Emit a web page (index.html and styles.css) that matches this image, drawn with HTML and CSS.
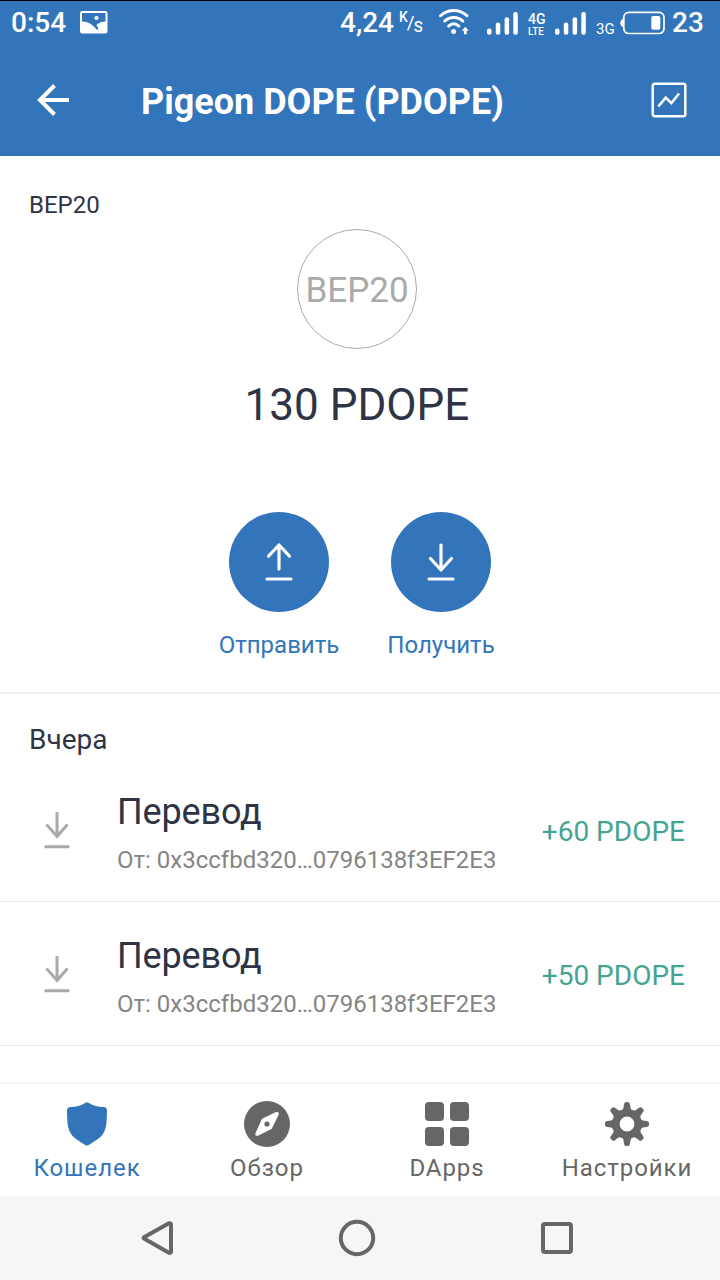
FILE: index.html
```html
<!DOCTYPE html>
<html lang="ru">
  <head>
    <meta charset="utf-8">
    <title>Pigeon DOPE (PDOPE)</title>
    <link rel="stylesheet" href="styles.css">
  </head>
  <body>
    <div class="screen">
      <header class="header">
        <div class="status-bar">
          <span class="time">0:54</span>
          <svg class="picture-icon" width="28" height="23" viewBox="0 0 28 23">
            <rect x="1" y="1" width="25.5" height="20.5" rx="1.5" fill="none" stroke="#fff" stroke-width="2"/>
            <path d="M1 10.500C7 10 12.500 13 16.500 18.500L18.200 18.800C18.500 17 17.500 15.500 16.300 14.300C19 11.500 22 10.500 26.500 10.500V21.500H1Z" fill="#fff"/>
            <circle cx="16.500" cy="7" r="2.100" fill="#fff"/>
          </svg>
          <span class="speed">4,24</span>
          <span class="speed-unit"><span class="unit-k">K</span><span class="unit-slash">/</span><span class="unit-s">S</span></span>
          <svg class="wifi-icon" width="30" height="26" viewBox="0 0 30 26" fill="none" stroke="#fff" stroke-width="2.900" stroke-linecap="round">
            <path d="M1.500 6.800C9 -.2 20.500 -.2 28 6.800"/>
            <path d="M5.600 12.100C11 7.200 18.500 7.200 23.900 12.100"/>
            <path d="M9.600 17.100C12.800 14.300 16.700 14.300 19.900 17.100"/>
            <circle cx="14.600" cy="22.500" r="2.500" fill="#fff" stroke="none"/>
            <path d="M26.300 17.800L29.800 21.800H27.700V25.300H24.900V21.800H22.800Z" fill="#fff" stroke="none"/>
          </svg>
          <svg width="32" height="23" viewBox="0 0 32 23" fill="#fff">
            <rect x="0" y="16.500" width="4.500" height="6.300" rx="2"/>
            <rect x="8.800" y="10.500" width="4.500" height="12.300" rx="2"/>
            <rect x="17.600" y="5.300" width="4.500" height="17.500" rx="2"/>
            <rect x="26.300" y="0" width="4.500" height="22.800" rx="2"/>
          </svg>
          <span class="network-stack"><span>4G</span><span>LTE</span></span>
          <svg width="32" height="23" viewBox="0 0 32 23" fill="#fff">
            <rect x="0" y="16.500" width="4.500" height="6.300" rx="2"/>
            <rect x="8.800" y="10.500" width="4.500" height="12.300" rx="2"/>
            <rect x="17.600" y="5.300" width="4.500" height="17.500" rx="2"/>
            <rect x="26.300" y="0" width="4.500" height="22.800" rx="2"/>
          </svg>
          <span class="network">3G</span>
          <svg width="46" height="24" viewBox="0 0 46 24">
            <path d="M4 7.500C1.500 8 .3 10 .3 12S1.500 16 4 16.500Z" fill="#fff"/>
            <rect x="3.800" y="1.300" width="40.200" height="21.200" rx="5" fill="none" stroke="#fff" stroke-width="1.700"/>
            <rect x="31.300" y="5" width="9" height="13.800" rx="1.800" fill="#fff"/>
          </svg>
          <span class="battery-level">23</span>
        </div>
        <div class="toolbar">
          <svg width="34" height="34" viewBox="0 0 34 34" fill="none" stroke="#fff" stroke-width="4">
            <path d="M33 17H4"/>
            <path d="M18.500 2.500L4 17L18.500 31.500"/>
          </svg>
          <h1 class="title">Pigeon DOPE (PDOPE)</h1>
          <svg width="36" height="36" viewBox="0 0 36 36" fill="none" stroke="#fff" stroke-width="2.500">
            <rect x="1.700" y="1.700" width="32.600" height="32.600" rx="2"/>
            <path d="M7.300 24.500L14.700 15.700L20.400 21.200L28 11.500"/>
          </svg>
        </div>
      </header>

      <main class="content">
        <section class="asset">
          <div class="asset-type">BEP20</div>
          <div class="asset-logo">BEP20</div>
          <div class="balance">130 PDOPE</div>
          <div class="actions">
            <div class="action">
              <div class="action-circle">
                <svg width="30" height="40" viewBox="0 0 30 40" fill="none" stroke="#fff" stroke-width="3.200" stroke-linecap="round" stroke-linejoin="round">
                  <path d="M15 27V3M4.500 14.200L15 3L25.500 14.200M3 37H27"/>
                </svg>
              </div>
              <div class="action-label">Отправить</div>
            </div>
            <div class="action">
              <div class="action-circle">
                <svg width="30" height="40" viewBox="0 0 30 40" fill="none" stroke="#fff" stroke-width="3.200" stroke-linecap="round" stroke-linejoin="round">
                  <path d="M15 3V28M4.500 16.500L15 28L25.500 16.500M3 37H27"/>
                </svg>
              </div>
              <div class="action-label">Получить</div>
            </div>
          </div>
        </section>

        <section class="history">
          <h2 class="day">Вчера</h2>
          <div class="transaction">
            <svg class="transfer-icon" width="26" height="38" viewBox="0 0 26 38" fill="none" stroke="#aaa" stroke-width="3">
              <path d="M13 1V26M2.500 13.500L13 25.500L23.500 13.500M.5 35.800H25.500"/>
            </svg>
            <div class="details">
              <div class="name">Перевод</div>
              <div class="address">От: 0x3ccfbd320…0796138f3EF2E3</div>
            </div>
            <div class="amount">+60 PDOPE</div>
          </div>
          <div class="transaction">
            <svg class="transfer-icon" width="26" height="38" viewBox="0 0 26 38" fill="none" stroke="#aaa" stroke-width="3">
              <path d="M13 1V26M2.500 13.500L13 25.500L23.500 13.500M.5 35.800H25.500"/>
            </svg>
            <div class="details">
              <div class="name">Перевод</div>
              <div class="address">От: 0x3ccfbd320…0796138f3EF2E3</div>
            </div>
            <div class="amount">+50 PDOPE</div>
          </div>
        </section>
      </main>

      <nav class="tabs">
        <div class="tab active">
          <svg width="48" height="48" viewBox="0 0 48 48" fill="currentColor">
            <path d="M22.500 2.800Q24 1.800 25.500 2.800C30 6 35 7 40.500 7.100Q44 7.300 44 10.500C43.800 22 43.500 28 40.500 33C37.500 38.500 31 41.500 25.700 45Q24 46 22.300 45C17 41.500 10.500 38.500 7.500 33C4.500 28 4.200 22 4 10.500Q4 7.300 7.500 7.100C13 7 18 6 22.500 2.800Z"/>
          </svg>
          <span>Кошелек</span>
        </div>
        <div class="tab">
          <svg width="48" height="48" viewBox="0 0 48 48" fill="currentColor">
            <circle cx="24" cy="24" r="23"/>
            <path d="M19.500 18.500L32.500 12.300Q36.500 11 35.500 15L29 28.200Q28.700 29 28 29.300L15 35.700Q11.500 36.500 12.600 33L18.600 19.500Q19 18.800 19.500 18.500Z" fill="#fff"/>
            <circle cx="24" cy="24" r="2.600"/>
          </svg>
          <span>Обзор</span>
        </div>
        <div class="tab">
          <svg width="48" height="48" viewBox="0 0 48 48" fill="currentColor">
            <rect x="2" y="2" width="19" height="19" rx="4"/>
            <rect x="27" y="2" width="19" height="19" rx="4"/>
            <rect x="2" y="27" width="19" height="19" rx="4"/>
            <rect x="27" y="27" width="19" height="19" rx="4"/>
          </svg>
          <span>DApps</span>
        </div>
        <div class="tab">
          <svg width="48" height="48" viewBox="0 0 48 48" fill="currentColor">
            <defs>
              <path id="tooth" d="M18.500 11C20.500 9.500 20.700 7 21 4.500Q21.200 2 23 2H25Q26.800 2 27 4.500C27.300 7 27.500 9.500 29.500 11Z"/>
            </defs>
            <circle cx="24" cy="24" r="11.200" fill="none" stroke="currentColor" stroke-width="7.600"/>
            <use href="#tooth"/>
            <use href="#tooth" transform="rotate(45 24 24)"/>
            <use href="#tooth" transform="rotate(90 24 24)"/>
            <use href="#tooth" transform="rotate(135 24 24)"/>
            <use href="#tooth" transform="rotate(180 24 24)"/>
            <use href="#tooth" transform="rotate(225 24 24)"/>
            <use href="#tooth" transform="rotate(270 24 24)"/>
            <use href="#tooth" transform="rotate(315 24 24)"/>
          </svg>
          <span>Настройки</span>
        </div>
      </nav>

      <div class="system-nav">
        <svg width="40" height="40" viewBox="0 0 40 40" fill="none" stroke="#666" stroke-width="4" stroke-linejoin="round">
          <path d="M7 20.500Q6 20 7 19.300L31.500 5.400Q34 4.600 34 6.500V33.500Q34 35.500 31.500 34.600Z"/>
        </svg>
        <svg width="40" height="40" viewBox="0 0 40 40" fill="none" stroke="#666" stroke-width="4">
          <circle cx="20" cy="20" r="16.200"/>
        </svg>
        <svg width="40" height="40" viewBox="0 0 40 40" fill="none" stroke="#666" stroke-width="4">
          <rect x="6" y="6" width="28" height="28" rx="2"/>
        </svg>
      </div>
    </div>
  </body>
</html>
```

FILE: styles.css
```css
body {
  margin: 0;
  padding: 0;
  background-color: #fff;
  font-family: Roboto, sans-serif;
  color: #2e3445;
}

svg {
  display: block;
  flex-shrink: 0;
}

.screen {
  display: flex;
  flex-direction: column;
  width: 720px;
  height: 1280px;
  overflow: hidden;
}

.header {
  height: 155px;
  border-top: 1px solid #000;
  background-color: #3275bb;
  color: #fff;
}

.status-bar {
  display: flex;
  align-items: center;
  height: 44px;
  padding-left: 11px;
  font-size: 28px;
  font-weight: 500;
  line-height: 44px;
  white-space: nowrap;
}

.time {
  width: 69px;
}

.picture-icon {
  margin-top: -2px;
}

.speed {
  width: 59px;
  margin-left: 232px;
}

.speed-unit {
  display: flex;
  width: 40px;
  height: 24px;
  line-height: 24px;
}

.unit-k {
  font-size: 14px;
  line-height: 13px;
}

.unit-slash {
  margin-left: -1px;
  font-size: 19px;
  font-weight: 400;
  line-height: 24px;
}

.unit-s {
  margin-left: -1px;
  font-size: 15px;
  line-height: 33px;
}

.wifi-icon {
  margin: -2px 18px 0 0;
}

.network-stack {
  display: flex;
  flex-direction: column;
  width: 27px;
  margin: 3px 0 0 9px;
  font-size: 14px;
  line-height: 14px;
}

.network-stack span:last-child {
  font-size: 10px;
  line-height: 12px;
}

.network {
  width: 24px;
  margin-left: 9px;
  padding-top: 11px;
  font-size: 15px;
  font-weight: 400;
  line-height: 32px;
}

.battery-level {
  margin-left: 6px;
}

.toolbar {
  display: flex;
  align-items: center;
  height: 110px;
  padding: 0 33px 0 36px;
}

.title {
  flex: 1;
  margin: 3px 0 0 71px;
  font-size: 36px;
  font-weight: 700;
  line-height: 44px;
}

.asset {
  display: flex;
  flex-direction: column;
  align-items: center;
  box-sizing: border-box;
  height: 538px;
  padding-top: 35px;
  border-bottom: 2px solid #eee;
}

.asset-type {
  align-self: flex-start;
  margin-left: 29px;
  font-size: 24px;
  line-height: 28px;
}

.asset-logo {
  box-sizing: border-box;
  width: 120px;
  height: 120px;
  margin: 9.5px 6px 0 0;
  border: 1px solid #aaa;
  border-radius: 50%;
  color: #aaa;
  font-size: 35px;
  line-height: 121px;
  text-align: center;
}

.balance {
  margin: 30.5px 6px 0 0;
  font-size: 44px;
  line-height: 52px;
}

.actions {
  display: flex;
  margin-top: 80.5px;
}

.action {
  display: flex;
  flex-direction: column;
  align-items: center;
  width: 162px;
}

.action-circle {
  display: flex;
  align-items: center;
  justify-content: center;
  width: 100px;
  height: 100px;
  border-radius: 50%;
  background-color: #3275bb;
}

.action-label {
  margin-top: 19.5px;
  color: #3275bb;
  font-size: 24px;
  line-height: 28px;
}

.day {
  margin: 0;
  padding: 29px 0 4px 29px;
  font-size: 28px;
  font-weight: 400;
  line-height: 34px;
}

.transaction {
  display: flex;
  align-items: center;
  box-sizing: border-box;
  height: 144px;
  padding: 4px 35px 0 44px;
  border-bottom: 1px solid #eaeaea;
}

.day + .transaction {
  height: 141px;
  padding-top: 2px;
}

.transfer-icon {
  margin-bottom: 4px;
}

.details {
  flex: 1;
  margin-left: 47px;
}

.name {
  font-size: 36px;
  line-height: 44px;
  letter-spacing: -0.15px;
}

.address {
  margin-top: 12px;
  color: #858585;
  font-size: 24px;
  line-height: 28px;
}

.amount {
  color: #45a491;
  font-size: 28px;
  line-height: 34px;
}

.tabs {
  display: flex;
  box-sizing: border-box;
  height: 114px;
  margin-top: auto;
  padding-top: 16px;
  border-top: 2px solid #f5f5f5;
}

.tab {
  display: flex;
  flex-direction: column;
  align-items: center;
  flex: 0 0 180px;
  color: #666;
  font-size: 24px;
  line-height: 28px;
  letter-spacing: 0.95px;
}

.tab:first-child {
  margin-left: -3px;
}

.tab span {
  margin-top: 6px;
}

.tab.active {
  color: #3275bb;
}

.system-nav {
  display: flex;
  align-items: center;
  gap: 160px;
  height: 84px;
  padding-left: 137px;
  background-color: #f6f6f6;
}
```
